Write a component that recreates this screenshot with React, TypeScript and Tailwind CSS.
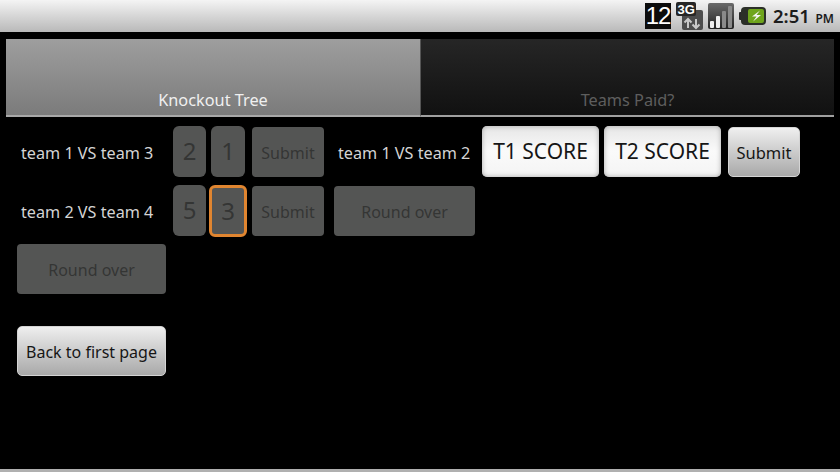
const font = "font-['Noto_Sans','Open_Sans',sans-serif]";

function Digit({ text, w = "w-[33px]" }: { text: string; w?: string }) {
  return (
    <div className={`${w} h-[51px] shrink-0 rounded-[6px] bg-[#545554] text-[#343534] text-[24px] flex items-center justify-center`}>
      {text}
    </div>
  );
}

function Disabled({ w, text }: { w: string; text: string }) {
  return (
    <div className={`${w} h-[50px] pt-[2px] shrink-0 rounded-[4px] bg-[#545554] text-[#343534] text-[16px] flex items-center justify-center`}>
      {text}
    </div>
  );
}

function White({ w, h = "h-[50px]", text, size, bg }: { w: string; h?: string; text: string; size: string; bg: string }) {
  return (
    <div className={`${w} ${h} ${size} ${bg} pt-[2px] shrink-0 rounded-[5px] text-[#161616] flex items-center justify-center`}>
      {text}
    </div>
  );
}

const gradient = "bg-gradient-to-b from-[#efefef] to-[#a9a9a9] border border-[#d4d4d4]";
const glossy = "bg-gradient-to-b from-[#e6e6e6] via-[#fafafa] to-[#f4f4f4] shadow-[inset_0_0_5px_#a8a8a8]";

export default function App() {
  return (
    <div className={`${font} w-[840px] h-[472px] bg-black flex flex-col overflow-hidden`}>
      <div className="h-[32px] shrink-0 bg-gradient-to-b from-[#f4f4f4] to-[#b9b9b9] flex items-center justify-end pr-[6px]">
        <div className="w-[26px] h-[26px] bg-[#0c0c0c] text-white text-[24px] leading-none flex items-center justify-center tracking-[-1px] mr-[5px] font-['Liberation_Sans',sans-serif]">12</div>
        <svg width="27" height="28" viewBox="0 0 27 28" className="mr-[5px]">
          <rect x="6" y="8" width="21" height="20" rx="2" fill="#4c4c4c" />
          <rect x="0" y="0" width="20" height="14" rx="2" fill="#262626" />
          <text x="1.5" y="12" fontSize="13" fontWeight="700" fill="#fff" fontFamily="Liberation Sans">3G</text>
          <path d="M12 26v-9m-3.5 3.5L12 17l3.5 3.5M20 17v9m-3.5-3.5L20 26l3.5-3.5" stroke="#c8c8c8" strokeWidth="2" fill="none" />
        </svg>
        <svg width="26" height="26" viewBox="0 0 26 26" className="mr-[5px]">
          <defs>
            <linearGradient id="sig" x1="0" y1="0" x2="0" y2="1">
              <stop offset="0" stopColor="#6a6a6a" />
              <stop offset="1" stopColor="#222" />
            </linearGradient>
          </defs>
          <rect width="26" height="26" rx="2" fill="url(#sig)" />
          <rect x="2" y="18" width="4" height="7" rx="1" fill="#f0f0f0" />
          <rect x="8" y="13" width="4" height="12" rx="1" fill="#f0f0f0" />
          <rect x="14" y="8" width="4" height="17" rx="1" fill="#8a8a8a" />
          <rect x="20" y="3" width="4" height="22" rx="1" fill="#8a8a8a" />
        </svg>
        <svg width="27" height="20" viewBox="0 0 27 20" className="mr-[7px]">
          <rect x="0" y="6" width="4" height="8" rx="1" fill="#2a2a2a" />
          <rect x="2" y="1" width="25" height="18" rx="4" fill="#2b2f28" />
          <rect x="9" y="3" width="16" height="14" rx="2" fill="#6fa51c" />
          <path d="M21 4.5l-8 6h4.5l-3.5 5 8-6.5h-4.5z" fill="#f4f4f4" />
        </svg>
        <div className="text-[#1c1c1c] font-semibold leading-none whitespace-nowrap w-[61px] flex items-baseline justify-between">
          <span className="text-[18.5px]">2:51</span>
          <span className="text-[12px]">PM</span>
        </div>
      </div>

      <div className="flex h-[78px] mt-[7px] px-[6px] shrink-0">
        <div className="w-[414px] bg-gradient-to-b from-[#9e9e9e] to-[#7b7b7b] border-b-2 border-[#a8a8a8] flex items-end justify-center pb-[4px] text-[#f0f0f0] text-[16.3px] leading-[22px]">
          Knockout Tree
        </div>
        <div className="flex-1 bg-gradient-to-b from-[#262626] to-[#111111] border-l border-[#555] border-b-2 border-b-[#a0a0a0] flex items-end justify-center pb-[4px] text-[#5e5e5e] text-[16.3px] leading-[22px]">
          Teams Paid?
        </div>
      </div>

      <div className="flex items-center h-[52px] mt-[8px] shrink-0">
        <div className="ml-[21px] w-[152px] shrink-0 text-[#d4d4d4] text-[16.2px] mt-[4px]">team 1 VS team 3</div>
        <Digit text="2" />
        <div className="ml-[5px]"><Digit text="1" w="w-[34px]" /></div>
        <div className="ml-[7px] mt-[2px]"><Disabled w="w-[72px]" text="Submit" /></div>
        <div className="ml-[14px] w-[144px] shrink-0 text-[#d4d4d4] text-[16.2px] mt-[4px]">team 1 VS team 2</div>
        <White w="w-[117px]" h="h-[51px]" text="T1 SCORE" size="text-[21px]" bg={glossy} />
        <div className="ml-[5px]"><White w="w-[117px]" h="h-[51px]" text="T2 SCORE" size="text-[21px]" bg={glossy} /></div>
        <div className="ml-[7px] mt-[2px]"><White w="w-[72px]" text="Submit" size="text-[16.5px]" bg={gradient} /></div>
      </div>

      <div className="flex items-center h-[52px] mt-[8px] shrink-0">
        <div className="ml-[21px] w-[152px] shrink-0 text-[#d4d4d4] text-[16.2px] mt-[2px]">team 2 VS team 4</div>
        <div className="mb-[2px]"><Digit text="5" /></div>
        <div className="ml-[3px] mb-[1px] w-[38px] h-[52px] shrink-0 rounded-[6px] border-[3px] border-[#e08530] bg-[#545554] text-[#343534] text-[24px] flex items-center justify-center">3</div>
        <div className="ml-[5px]"><Disabled w="w-[72px]" text="Submit" /></div>
        <div className="ml-[10px]"><Disabled w="w-[141px]" text="Round over" /></div>
      </div>

      <div className="ml-[17px] mt-[7px] shrink-0">
        <Disabled w="w-[149px]" text="Round over" />
      </div>

      <div className="ml-[17px] mt-[32px] shrink-0">
        <White w="w-[149px]" text="Back to first page" size="text-[16px]" bg={gradient} />
      </div>

      <div className="mt-auto h-[3px] shrink-0 bg-[#b0b0b0]" />
    </div>
  );
}
